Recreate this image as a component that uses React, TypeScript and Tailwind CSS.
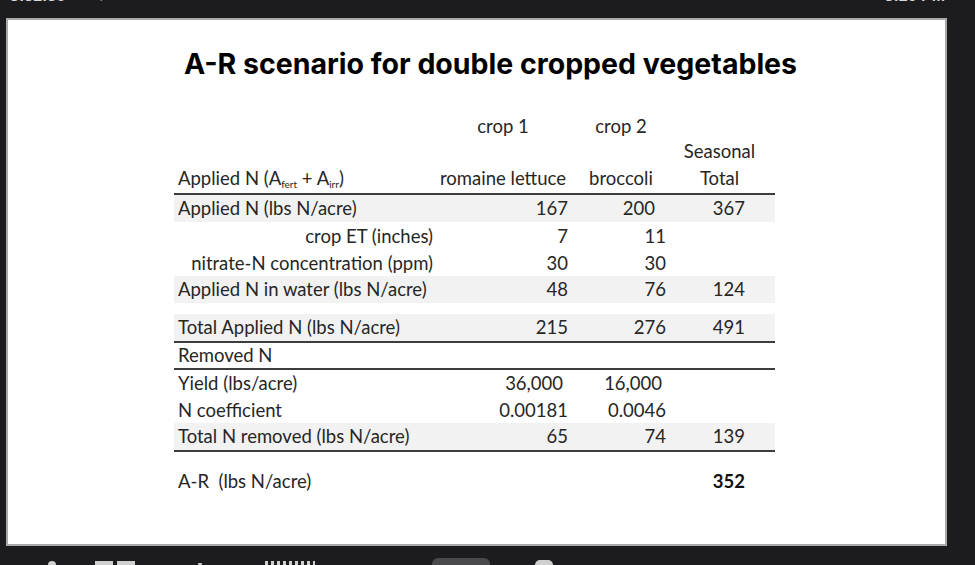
import React from "react";

const COLS = "grid grid-cols-[260px_138px_98px_105px]";
const F = { fontFamily: "Lato, 'Open Sans', sans-serif" };

type RowProps = {
  label?: React.ReactNode;
  c1?: string;
  c2?: string;
  t?: string;
  h?: string;
  shade?: boolean;
  line?: boolean;
  labelRight?: boolean;
  c1pr?: string;
  c2pr?: string;
  boldT?: boolean;
};

function Row({ label, c1, c2, t, h = "h-[27px]", shade, line, labelRight, c1pr = "pr-[4px]", c2pr = "pr-[4px]", boldT }: RowProps) {
  return (
    <div
      className={`${COLS} ${h} items-center ${shade ? "bg-[#f2f2f2]" : ""} ${line ? "border-b-2 border-[#3c3c3c]" : ""}`}
    >
      <div className={labelRight ? "text-right pr-[1px] whitespace-nowrap" : "pl-[4px] whitespace-nowrap"}>{label}</div>
      <div className={`text-right ${c1pr}`}>{c1}</div>
      <div className={`text-right ${c2pr}`}>{c2}</div>
      <div className={`text-right pr-[30px] ${boldT ? "font-bold text-[#111]" : ""}`}>{t}</div>
    </div>
  );
}

export default function App() {
  return (
    <div className="w-[975px] h-[565px] bg-[#1c1b1e] overflow-hidden flex flex-col">
      {/* top status bar, mostly cut off */}
      <div
        className="h-[18px] overflow-hidden flex items-start justify-between pl-[10px] pr-[30px] text-[#d6d6d6]"
        style={{ fontFamily: "'Liberation Sans', sans-serif" }}
      >
        <div className="flex items-start gap-[28px] -mt-[12px] text-[16px] leading-[16px] font-bold">
          <span>8:32:36</span>
          <span>▼</span>
          <span>•</span>
        </div>
        <div className="-mt-[12px] text-[16px] leading-[16px] font-bold">3:20 PM</div>
      </div>

      {/* slide */}
      <div className="ml-[6px] w-[941px] h-[528px] bg-white border-2 border-[#a9a9a9] flex flex-col text-[#262626] text-[18.5px] leading-none">
        <h1
          className="mt-[28px] pl-[28px] text-center text-[28.5px] leading-[32px] font-bold text-black"
          style={{ fontFamily: "Inter, 'Liberation Sans', sans-serif" }}
        >
          A-R scenario for double cropped vegetables
        </h1>

        <div className="mt-[33px] ml-[166px] w-[601px] flex flex-col" style={F}>
          <div className={`${COLS} h-[26px] items-center`}>
            <div />
            <div className="text-center">crop 1</div>
            <div className="text-center">crop 2</div>
            <div />
          </div>
          <div className={`${COLS} h-[25px] items-center`}>
            <div />
            <div />
            <div />
            <div className="text-center pr-[6px]">Seasonal</div>
          </div>
          <div className={`${COLS} h-[31px] items-center border-b-2 border-[#3c3c3c]`}>
            <div className="pl-[4px] whitespace-nowrap">
              Applied N (A<sub className="text-[10px]">fert</sub> + A<sub className="text-[10px]">irr</sub>)
            </div>
            <div className="text-center whitespace-nowrap">romaine lettuce</div>
            <div className="text-center">broccoli</div>
            <div className="text-center pr-[6px]">Total</div>
          </div>

          <Row label="Applied N (lbs N/acre)" c1="167" c2="200" c2pr="pr-[15px]" t="367" shade />
          <Row label="crop ET (inches)" c1="7" c2="11" labelRight h="h-[28px]" />
          <Row label="nitrate-N concentration (ppm)" c1="30" c2="30" labelRight h="h-[26px]" />
          <Row label="Applied N in water (lbs N/acre)" c1="48" c2="76" t="124" shade />
          <div className="h-[11px]" />
          <Row label="Total Applied N (lbs N/acre)" c1="215" c2="276" t="491" shade line h="h-[29px]" />
          <Row label="Removed N" h="h-[27px]" line />
          <Row label="Yield (lbs/acre)" c1="36,000" c1pr="pr-[9px]" c2="16,000" c2pr="pr-[8px]" />
          <Row label="N coefficient" c1="0.00181" c2="0.0046" h="h-[26px]" />
          <Row label="Total N removed (lbs N/acre)" c1="65" c2="74" t="139" shade line h="h-[29px]" />
          <div className="h-[16px]" />
          <Row label={<span>A-R&nbsp; (lbs N/acre)</span>} t="352" boldT />
        </div>
      </div>

      {/* bottom toolbar, mostly cut off */}
      <div className="flex-1 flex items-end">
        <div className="flex items-end h-[8px]">
          <div className="ml-[48px] w-[8px] h-[4px] rounded-t-full bg-[#d0d0d0]" />
          <div className="ml-[39px] w-[18px] h-[4px] bg-[#d0d0d0]" />
          <div className="ml-[4px] w-[18px] h-[4px] bg-[#d0d0d0]" />
          <div className="ml-[63px] w-[4px] h-[2px] bg-[#bdbdbd]" />
          <div className="ml-[63px] w-[50px] h-[4px] bg-[repeating-linear-gradient(90deg,#d0d0d0_0px,#d0d0d0_3px,transparent_3px,transparent_6px)]" />
          <div className="ml-[117px] w-[58px] h-[7px] rounded-t-[6px] bg-[#4a4a4d]" />
          <div className="ml-[45px] w-[18px] h-[5px] rounded-t-full bg-[#d0d0d0]" />
        </div>
      </div>
    </div>
  );
}
